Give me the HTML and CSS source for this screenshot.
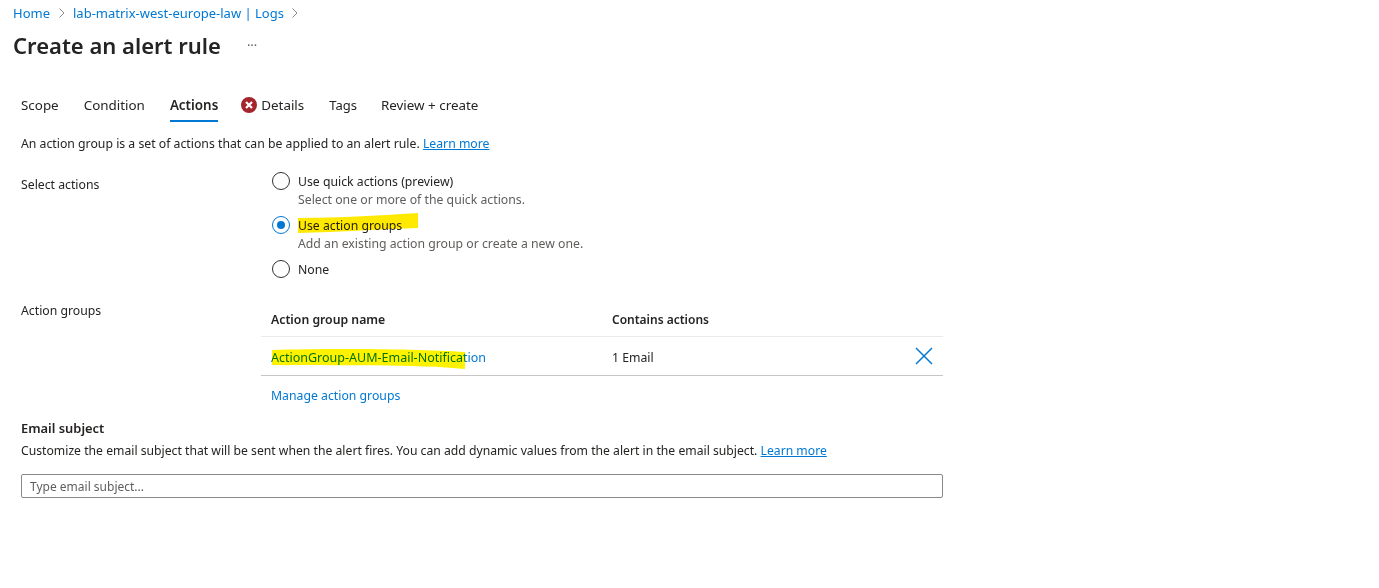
FILE: index.html
```html
<!DOCTYPE html>
<html lang="en">
<head>
<meta charset="utf-8">
<title>Create an alert rule</title>
<link rel="stylesheet" href="styles.css">
</head>
<body>
<nav class="crumbs">
  <a href="#">Home</a>
  <svg class="chev" viewBox="0 0 8 12"><path d="M1.5 1.5 6 6l-4.500 4.500"/></svg>
  <a href="#">lab-matrix-west-europe-law | Logs</a>
  <svg class="chev" viewBox="0 0 8 12"><path d="M1.5 1.500 6 6l-4.500 4.500"/></svg>
</nav>
<header class="title-row">
  <h1>Create an alert rule</h1>
  <span class="more">···</span>
</header>
<div class="tabs">
  <span class="tab">Scope</span>
  <span class="tab">Condition</span>
  <span class="tab active">Actions</span>
  <span class="tab with-icon">
    <svg class="err" viewBox="0 0 16 16"><circle cx="8" cy="8" r="8" fill="#a4262c"/><path d="M5 5l6 6M11 5l-6 6" stroke="#fff" stroke-width="2.200" fill="none"/></svg>
    Details
  </span>
  <span class="tab tight">Tags</span>
  <span class="tab">Review + create</span>
</div>
<p class="intro">An action group is a set of actions that can be applied to an alert rule. <a href="#" class="ul">Learn more</a></p>
<section class="form-row actions-row">
  <div class="label">Select actions</div>
  <div class="radios">
    <div class="radio-item"><span class="radio"></span><div><div class="radio-label">Use quick actions (preview)</div><div class="hint">Select one or more of the quick actions.</div></div></div>
    <div class="radio-item"><span class="radio on"></span><div><div class="radio-label">Use action groups</div><div class="hint">Add an existing action group or create a new one.</div></div></div>
    <div class="radio-item"><span class="radio"></span><div><div class="radio-label">None</div></div></div>
  </div>
</section>
<section class="form-row groups-row">
  <div class="label">Action groups</div>
  <div class="table-wrap">
    <div class="thead"><span class="col-a">Action group name</span><span class="col-b">Contains actions</span></div>
    <div class="tbody">
      <a href="#" class="col-a">ActionGroup-AUM-Email-Notification</a>
      <span class="col-b">1 Email</span>
      <svg class="close" viewBox="0 0 18 18"><path d="M1 1l16 16M17 1 1 17"/></svg>
    </div>
    <a href="#" class="manage">Manage action groups</a>
  </div>
</section>
<section class="email">
  <h2>Email subject</h2>
  <p>Customize the email subject that will be sent when the alert fires. You can add dynamic values from the alert in the email subject. <a href="#" class="ul">Learn more</a></p>
  <input class="subject" type="text" placeholder="Type email subject...">
</section>
<svg class="marker" viewBox="0 0 1379 588" aria-hidden="true">
  <path d="M298 218 C340 218 385 215 418 213 L418 228 C385 229 340 232 298 233z" fill="#ffe900"/>
  <path d="M272 350 C330 348 420 349 465 352 L465 369 C420 364 330 366 272 365z" fill="#fff200"/>
</svg>
</body>
</html>
```
FILE: styles.css
```css
* { box-sizing: border-box; }
html, body { margin: 0; height: 100%; }
body {
  position: relative;
  width: 1379px;
  height: 588px;
  overflow: hidden;
  background: #fff;
  color: #252423;
  font-family: "Noto Sans", "Open Sans", sans-serif;
  font-size: 12.250px;
  line-height: 18px;
}
a { color: #0078d4; text-decoration: none; }
a.ul { text-decoration: underline; }
p { margin: 0; }
.crumbs {
  display: flex;
  align-items: center;
  gap: 7.500px;
  height: 18px;
  margin: 4px 0 0 13px;
  font-size: 13px;
}
.chev { width: 8px; height: 12px; fill: none; stroke: #8a8886; stroke-width: 1; }
.title-row { display: flex; align-items: center; height: 32px; margin: 7px 0 0 13px; }
h1 { margin: 0; font-size: 22px; font-weight: 600; line-height: 32px; color: #242424; }
.more { margin-left: 26px; color: #605e5c; font-size: 13px; }
.tabs { display: flex; margin: 28px 0 0 21px; height: 34px; font-size: 13.400px; }
.tab { display: flex; align-items: flex-start; gap: 4px; margin-right: 25px; padding-top: 7px; height: 34px; white-space: nowrap; }
.tab.active { font-weight: 600; border-bottom: 2px solid #0078d4; height: 33px; margin-right: 23px; }
.tab.tight { margin-right: 24px; font-size: 13px; }
.err { width: 16px; height: 16px; margin-top: 1px; }
.intro { margin: 12px 0 0 21px; height: 18px; }
.form-row { display: flex; margin-left: 21px; }
.label { width: 250px; flex: none; }
.actions-row { margin-top: 23px; }
.radios { display: flex; flex-direction: column; gap: 8px; margin-top: -3px; }
.radio-item { display: flex; gap: 8px; }
.radio {
  flex: none;
  width: 18px;
  height: 18px;
  margin: -1px 0 0 1px;
  border: 1px solid #323130;
  border-radius: 50%;
  background: #fff;
}
.radio.on { border-color: #0078d4; display: flex; align-items: center; justify-content: center; }
.radio.on::after { content: ""; width: 8px; height: 8px; border-radius: 50%; background: #0078d4; }
.hint { color: #605e5c; }
.groups-row { margin-top: 22px; }
.groups-row .label { width: 240px; margin-top: 1px; }
.table-wrap { width: 682px; }
.thead, .tbody { display: flex; align-items: center; padding-left: 10px; }
.thead { height: 36px; padding-top: 2px; border-bottom: 1px solid #edebe9; font-weight: 600; }
.thead .col-b { font-size: 12px; }
.tbody { height: 39px; padding-top: 3px; border-bottom: 1px solid #c8c6c4; }
.tbody a { font-size: 12.500px; }
.col-a { width: 341px; flex: none; }
.col-b { flex: 1; }
.close { width: 18px; height: 18px; margin: -4px 10px 0 0; fill: none; stroke: #0078d4; stroke-width: 1.500; }
.manage { display: block; margin: 11px 0 0 10px; }
.email { margin: 14px 0 0 21px; }
h2 { margin: 0; font-size: 12.900px; font-weight: 600; line-height: 18px; }
.email p { margin-top: 5px; font-size: 12.200px; }
.subject {
  display: block;
  width: 922px;
  height: 24px;
  margin-top: 14px;
  padding: 0 8px;
  border: 1px solid #8a8886;
  border-radius: 2px;
  font: inherit;
  font-size: 12px;
  color: #252423;
  outline: none;
}
.subject::placeholder { color: #605e5c; opacity: 1; }
.marker { position: absolute; inset: 0; width: 1379px; height: 588px; mix-blend-mode: multiply; pointer-events: none; }
```
